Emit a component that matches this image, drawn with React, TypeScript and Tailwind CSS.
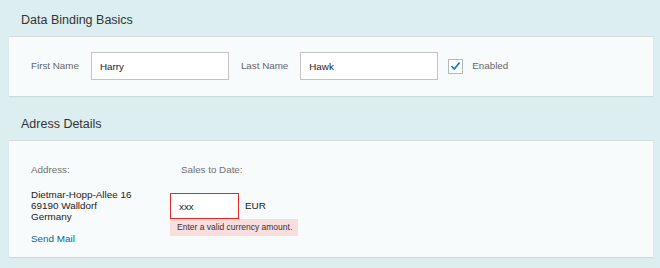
import React, { useState } from 'react';

export default function App() {
  const [first, setFirst] = useState('Harry');
  const [last, setLast] = useState('Hawk');
  const [enabled, setEnabled] = useState(true);
  const [sales, setSales] = useState('xxx');

  return (
    <div className="w-[660px] h-[268px] bg-[#ddeef1] overflow-hidden" style={{ fontFamily: '"Liberation Sans", Arial, sans-serif' }}>
      <div className="pl-[21px] pt-[12px] pb-[8px] text-[12.5px] leading-[16px] text-[#333]">Data Binding Basics</div>

      <div className="ml-[9px] w-[644px] h-[60px] bg-[#f7fbfc] border-t border-[#d5dadd] shadow-[0_1px_1px_rgba(0,0,0,0.08)] flex items-center pl-[22px] pb-[1px]">
        <label className="text-[9.8px] text-[#666]">First Name</label>
        <input
          value={first}
          onChange={(e) => setFirst(e.target.value)}
          className="ml-[12px] w-[138px] h-[28px] border border-[#c4c4c4] bg-white px-[8px] text-[9.8px] text-[#222] outline-none"
        />
        <label className="ml-[12px] text-[9.8px] text-[#666]">Last Name</label>
        <input
          value={last}
          onChange={(e) => setLast(e.target.value)}
          className="ml-[12px] w-[138px] h-[28px] border border-[#c4c4c4] bg-white px-[8px] text-[9.8px] text-[#222] outline-none"
        />
        <button
          onClick={() => setEnabled(!enabled)}
          className="ml-[10px] w-[15px] h-[15px] border border-[#b8b8b8] bg-white flex items-center justify-center"
        >
          {enabled && (
            <svg width="11" height="10" viewBox="0 0 11 10">
              <path d="M1.5 5.2 L4.3 8 L9.6 1.4" fill="none" stroke="#007cc0" strokeWidth="1.6" />
            </svg>
          )}
        </button>
        <span className="ml-[9px] text-[9.8px] text-[#666]">Enabled</span>
      </div>

      <div className="pl-[21px] pt-[20px] pb-[8px] text-[12.5px] leading-[16px] text-[#333]">Adress Details</div>

      <div className="ml-[9px] w-[644px] h-[117px] bg-[#f7fbfc] border-t border-[#d5dadd] shadow-[0_1px_1px_rgba(0,0,0,0.08)] flex pt-[23px]">
        <div className="pl-[22px] w-[161px] flex flex-col">
          <div className="text-[9.8px] leading-[12px] text-[#707070]">Address:</div>
          <div className="mt-[13px] text-[9.9px] leading-[11px] text-[#222]">
            <div>Dietmar-Hopp-Allee 16</div>
            <div>69190 Walldorf</div>
            <div>Germany</div>
          </div>
          <a href="#" className="mt-[11px] text-[9.9px] leading-[11px] text-[#00679e]">Send Mail</a>
        </div>
        <div className="flex flex-col">
          <div className="pl-[11px] text-[9.8px] leading-[12px] text-[#707070]">Sales to Date:</div>
          <div className="mt-[17px] flex items-center">
            <input
              value={sales}
              onChange={(e) => setSales(e.target.value)}
              className="w-[69px] h-[26px] border-[1.5px] border-[#e52929] bg-white px-[8px] text-[9.8px] text-[#222] outline-none"
            />
            <span className="ml-[6px] text-[9.9px] text-[#222]">EUR</span>
          </div>
          <div className="w-[128px] h-[17px] bg-[#f9dede] pl-[7px] flex items-center text-[8.5px] text-[#333]">
            Enter a valid currency amount.
          </div>
        </div>
      </div>
    </div>
  );
}
